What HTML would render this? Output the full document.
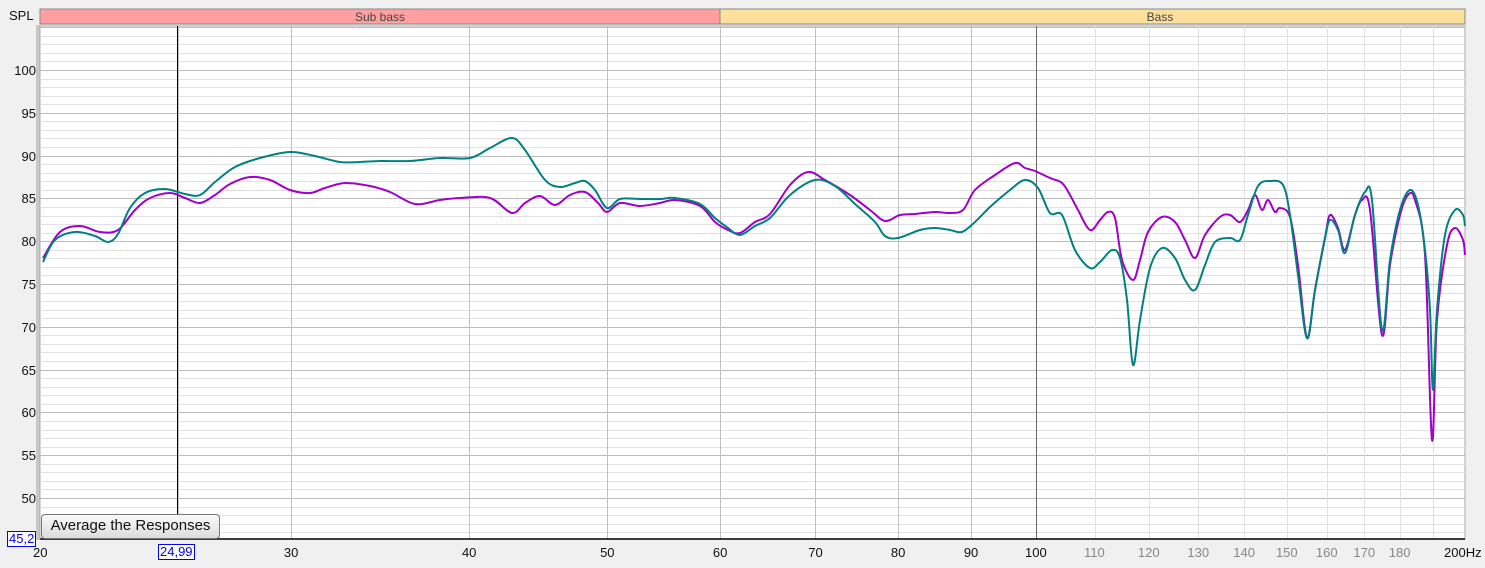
<!DOCTYPE html><html><head><style>
body{margin:0;width:1485px;height:568px;background:#f0f0f0;font-family:"Liberation Sans",sans-serif;overflow:hidden;position:relative}
.t{position:absolute;font-size:13px;color:#111}
.btn{position:absolute;left:41px;top:514px;width:177px;height:23px;border:1px solid #777;border-radius:4px;background:linear-gradient(#fafafa,#dcdcdc);font-size:15px;line-height:22px;text-align:center;color:#111}
.box{position:absolute;border:1px solid #00f;color:#00f;background:#fff;font-size:13px;line-height:14px;padding:0 1px}
</style></head><body>
<svg width="1485" height="568" style="position:absolute;left:0;top:0" id="s">
<rect x="40" y="9" width="680" height="15" fill="#ffa0a0" stroke="#888"/>
<rect x="720" y="9" width="745" height="15" fill="#fce19c" stroke="#888"/>
<text x="380" y="21" font-size="12" text-anchor="middle" fill="#444" font-family="Liberation Sans">Sub bass</text>
<text x="1160" y="21" font-size="12" text-anchor="middle" fill="#444" font-family="Liberation Sans">Bass</text>
<rect x="36" y="25" width="4" height="515" fill="#c8c8c8"/>
<rect x="40" y="26" width="1425" height="513" fill="#fff" stroke="#aaa"/>
<g id="g"></g>
<line x1="40" y1="539" x2="1465" y2="539" stroke="#000" stroke-width="1.5"/>
<line x1="177.5" y1="26" x2="177.5" y2="539" stroke="#000"/>
<path id="c1" fill="none" stroke="#a000c8" stroke-width="2"/>
<path id="c2" fill="none" stroke="#008080" stroke-width="2"/>
</svg>
<div class="t" style="left:9px;top:8px">SPL</div>
<div class="btn">Average the Responses</div>
<div class="box" style="left:7px;top:531px">45,2</div>
<div class="box" style="left:158px;top:544px">24,99</div>
<div id="lab"></div>
<script>
var X=f=>40+Math.log10(f/20)*1425,Y=d=>70+(100-d)*8.56,g=document.getElementById('g'),h='',L='';
for(var d=46;d<=105;d++){var y=Math.round(Y(d))+.5;h+='<line x1="40" x2="1465" y1="'+y+'" y2="'+y+'" stroke="'+(d%5?'#e2e2e2':'#bcbcbc')+'"/>';
if(d%5==0&&d>=50&&d<=100)L+='<div class="t" style="right:'+(1485-36)+'px;top:'+(y-8)+'px">'+d+'</div>';}
var fs=[25,30,40,50,60,70,80,90,100,110,120,130,140,150,160,170,180,190];
fs.forEach(f=>{var x=Math.round(X(f))+.5;h+='<line y1="26" y2="539" x1="'+x+'" x2="'+x+'" stroke="'+(f==100?'#666':(f>100?'#e0e0e0':'#c0c0c0'))+'"/>';});
g.innerHTML=h;
[20,30,40,50,60,70,80,90,100,110,120,130,140,150,160,170,180].forEach(f=>{L+='<div class="t" style="left:'+(X(f)-(f>=100?11:7))+'px;top:545px;color:'+(f>100?'#888':'#111')+'">'+f+'</div>'});
L+='<div class="t" style="left:1444px;top:545px">200Hz</div>';
document.getElementById('lab').innerHTML=L;
function sm(p){var s='M'+p[0][0]+','+p[0][1];for(var i=0;i<p.length-1;i++){var a=p[i-1]||p[i],b=p[i],c=p[i+1],e=p[i+2]||c;s+=' C'+(b[0]+(c[0]-a[0])/6)+','+(b[1]+(c[1]-a[1])/6)+' '+(c[0]-(e[0]-b[0])/6)+','+(c[1]-(e[1]-b[1])/6)+' '+c[0]+','+c[1];}return s}
var t=[[43,262],[55,240],[75,232],[95,236],[108,242],[118,234],[130,208],[145,193],[165,189],[185,194],[200,195],[215,182],[235,167],[260,158],[290,152],[315,156],[340,162],[360,162],[380,161],[410,161],[440,158],[470,158],[490,148],[512,138],[525,150],[545,180],[560,187],[575,183],[585,181],[595,190],[607,208],[620,199],[640,199],[660,199],[675,198],[700,204],[715,218],[728,228],[740,235],[755,226],[770,218],[790,195],[815,180],[835,186],[855,204],[875,222],[885,236],[898,238],[920,230],[935,228],[950,230],[962,232],[975,222],[990,207],[1010,190],[1025,180],[1038,188],[1050,213],[1062,215],[1075,250],[1090,268],[1100,262],[1112,250],[1120,258],[1127,300],[1133,365],[1140,320],[1150,268],[1162,248],[1175,258],[1185,280],[1195,290],[1205,265],[1215,242],[1230,238],[1240,240],[1248,215],[1258,186],[1270,181],[1283,185],[1290,215],[1298,275],[1307,338],[1315,290],[1325,238],[1330,220],[1338,230],[1345,253],[1355,215],[1365,192],[1372,200],[1382,330],[1390,260],[1400,210],[1410,190],[1418,205],[1425,250],[1430,310],[1433,390],[1437,310],[1445,235],[1455,210],[1463,215],[1465,226]];
var m=[[43,258],[60,232],[80,226],[100,232],[118,230],[135,210],[150,198],[170,193],[185,198],[200,203],[215,195],[230,184],[250,177],[270,180],[290,190],[310,193],[325,188],[345,183],[370,186],[390,192],[415,204],[440,200],[460,198],[490,198],[512,213],[525,203],[540,196],[555,205],[570,195],[585,192],[598,203],[607,212],[620,203],[640,206],[660,203],[675,200],[700,206],[715,222],[728,230],[740,233],[755,222],[770,214],[790,185],[808,172],[825,180],[850,195],[870,210],[885,221],[900,215],[915,214],[935,212],[950,213],[963,210],[975,190],[995,175],[1015,163],[1025,168],[1035,171],[1050,178],[1062,183],[1070,195],[1078,210],[1090,230],[1100,220],[1108,212],[1115,218],[1122,260],[1133,280],[1140,260],[1148,232],[1162,217],[1175,222],[1185,240],[1195,258],[1205,235],[1220,217],[1230,215],[1240,222],[1248,210],[1255,195],[1262,210],[1268,200],[1275,212],[1280,208],[1290,217],[1298,265],[1307,338],[1315,290],[1325,238],[1330,215],[1338,228],[1345,250],[1355,215],[1362,200],[1370,210],[1382,335],[1390,265],[1400,215],[1408,195],[1415,200],[1425,255],[1432,440],[1437,320],[1447,245],[1455,228],[1463,240],[1465,255]];
document.getElementById('c1').setAttribute('d',sm(m));
document.getElementById('c2').setAttribute('d',sm(t));
</script>
</body></html>
